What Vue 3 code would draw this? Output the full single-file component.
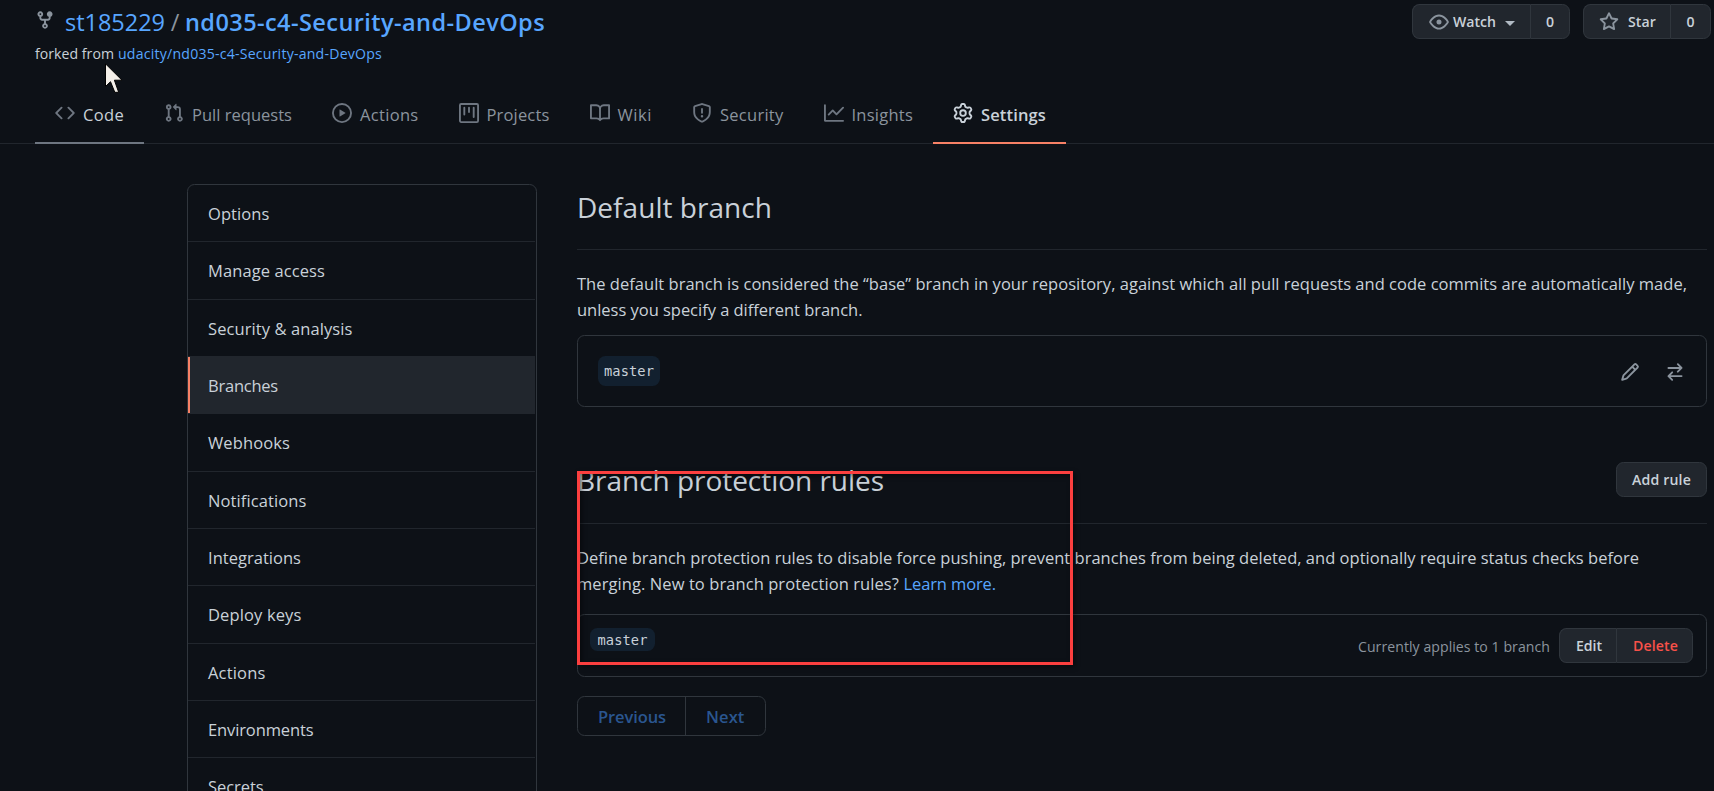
<script setup>
// Tracks a text run so that it fills the given width in pixels.
const vFit = {
  mounted(el, { value }) {
    const natural = el.getBoundingClientRect().width
    const count = el.textContent.length
    el.style.letterSpacing = `${(value - natural) / count}px`
  },
}

const icons = {
  fork: 'M5 3.25a.75.75 0 11-1.5 0 .75.75 0 011.5 0zm0 2.122a2.25 2.25 0 10-1.5 0v.878A2.25 2.25 0 005.75 8.5h1.5v2.128a2.251 2.251 0 101.5 0V8.5h1.5a2.25 2.25 0 002.25-2.25v-.878a2.25 2.25 0 10-1.5 0v.878a.75.75 0 01-.75.75h-4.5A.75.75 0 015 6.25v-.878zm3.75 7.378a.75.75 0 11-1.5 0 .75.75 0 011.5 0zm3-8.75a.75.75 0 100-1.5.75.75 0 000 1.5z',
  code: 'M4.72 3.22a.75.75 0 011.06 1.06L2.06 8l3.72 3.72a.75.75 0 11-1.06 1.06L.47 8.53a.75.75 0 010-1.06l4.25-4.25zm6.56 0a.75.75 0 10-1.06 1.06L13.94 8l-3.72 3.72a.75.75 0 101.06 1.06l4.25-4.25a.75.75 0 000-1.06l-4.25-4.25z',
  pull: 'M7.177 3.073L9.573.677A.25.25 0 0110 .854v4.792a.25.25 0 01-.427.177L7.177 3.427a.25.25 0 010-.354zM3.75 2.5a.75.75 0 100 1.5.75.75 0 000-1.5zm-2.25.75a2.25 2.25 0 113 2.122v5.256a2.251 2.251 0 11-1.5 0V5.372A2.25 2.25 0 011.5 3.25zM11 2.5h-1V4h1a1 1 0 011 1v5.628a2.251 2.251 0 101.5 0V5A2.5 2.5 0 0011 2.5zm1 10.25a.75.75 0 111.5 0 .75.75 0 01-1.5 0zM3.75 12a.75.75 0 100 1.5.75.75 0 000-1.5z',
  play: 'M1.5 8a6.5 6.5 0 1113 0 6.5 6.5 0 01-13 0zM8 0a8 8 0 100 16A8 8 0 008 0zM6.379 5.227A.25.25 0 006 5.442v5.117a.25.25 0 00.379.214l4.264-2.559a.25.25 0 000-.428L6.379 5.227z',
  project: 'M1.75 0A1.75 1.75 0 000 1.75v12.5C0 15.216.784 16 1.75 16h12.5A1.75 1.75 0 0016 14.25V1.75A1.75 1.75 0 0014.25 0H1.75zM1.5 1.75a.25.25 0 01.25-.25h12.5a.25.25 0 01.25.25v12.5a.25.25 0 01-.25.25H1.75a.25.25 0 01-.25-.25V1.75zM11.75 3a.75.75 0 00-.75.75v7.5a.75.75 0 001.5 0v-7.5a.75.75 0 00-.75-.75zm-8.25.75a.75.75 0 011.5 0v5.5a.75.75 0 01-1.5 0v-5.5zM8 3a.75.75 0 00-.75.75v3.5a.75.75 0 001.5 0v-3.5A.75.75 0 008 3z',
  book: 'M0 1.75A.75.75 0 01.75 1h4.253c1.227 0 2.317.59 3 1.501A3.744 3.744 0 0111.006 1h4.245a.75.75 0 01.75.75v10.5a.75.75 0 01-.75.75h-4.507a2.25 2.25 0 00-1.591.659l-.622.621a.75.75 0 01-1.06 0l-.622-.621A2.25 2.25 0 005.258 13H.75a.75.75 0 01-.75-.75V1.75zm8.755 3a2.25 2.25 0 012.25-2.25H14.5v9h-3.757c-.71 0-1.4.201-1.992.572l.004-7.322zm-1.504 7.324l.004-5.073-.002-2.253A2.25 2.25 0 005.003 2.5H1.5v9h3.757a3.75 3.75 0 011.994.574z',
  shield: 'M7.467.133a1.75 1.75 0 011.066 0l5.25 1.68A1.75 1.75 0 0115 3.48V7c0 1.566-.32 3.182-1.303 4.682-.983 1.498-2.585 2.813-5.032 3.855a1.7 1.7 0 01-1.33 0c-2.447-1.042-4.049-2.357-5.032-3.855C1.32 10.182 1 8.566 1 7V3.48a1.75 1.75 0 011.217-1.667l5.25-1.68zm.61 1.429a.25.25 0 00-.153 0l-5.25 1.68a.25.25 0 00-.174.238V7c0 1.358.275 2.666 1.057 3.86.784 1.194 2.121 2.34 4.366 3.297a.2.2 0 00.154 0c2.245-.956 3.582-2.104 4.366-3.298C13.225 9.666 13.5 8.36 13.5 7V3.48a.25.25 0 00-.174-.237l-5.25-1.68zM9 10.5a1 1 0 11-2 0 1 1 0 012 0zm-.25-5.75a.75.75 0 10-1.5 0v3a.75.75 0 001.5 0v-3z',
  graph: 'M1.5 1.75a.75.75 0 00-1.5 0v12.5c0 .414.336.75.75.75h14.5a.75.75 0 000-1.5H1.5V1.75zm14.28 2.53a.75.75 0 00-1.06-1.06L10 7.94 7.53 5.47a.75.75 0 00-1.06 0L3.22 8.72a.75.75 0 001.06 1.06L7 7.06l2.47 2.47a.75.75 0 001.06 0l5.25-5.25z',
  gear: 'M7.429 1.525a6.593 6.593 0 011.142 0c.036.003.108.036.137.146l.289 1.105c.147.56.55.967.997 1.189.174.086.341.183.501.29.417.278.97.423 1.53.27l1.102-.303c.11-.03.175.016.195.046.219.31.41.641.573.989.014.031.022.11-.059.19l-.815.806c-.411.406-.562.957-.53 1.456a4.588 4.588 0 010 .582c-.032.499.119 1.05.53 1.456l.815.806c.08.08.073.159.059.19a6.494 6.494 0 01-.573.99c-.02.029-.086.074-.195.045l-1.103-.303c-.559-.153-1.112-.008-1.529.27-.16.107-.327.204-.5.29-.449.222-.851.628-.998 1.189l-.289 1.105c-.029.11-.101.143-.137.146a6.613 6.613 0 01-1.142 0c-.036-.003-.108-.037-.137-.146l-.289-1.105c-.147-.56-.55-.967-.997-1.189a4.502 4.502 0 01-.501-.29c-.417-.278-.97-.423-1.53-.27l-1.102.303c-.11.03-.175-.016-.195-.046a6.492 6.492 0 01-.573-.989c-.014-.031-.022-.11.059-.19l.815-.806c.411-.406.562-.957.53-1.456a4.587 4.587 0 010-.582c.032-.499-.119-1.05-.53-1.456l-.815-.806c-.08-.08-.073-.159-.059-.19a6.44 6.44 0 01.573-.99c.02-.029.086-.075.195-.045l1.103.303c.559.153 1.112.008 1.529-.27.16-.107.327-.204.5-.29.449-.222.851-.628.998-1.189l.289-1.105c.029-.11.101-.143.137-.146zM8 0c-.236 0-.47.01-.701.03-.743.065-1.29.615-1.458 1.261l-.29 1.106c-.017.066-.078.158-.211.224a5.994 5.994 0 00-.668.386c-.123.082-.233.09-.3.071L3.27 2.776c-.644-.177-1.392.02-1.82.63a7.977 7.977 0 00-.704 1.217c-.315.675-.111 1.422.363 1.891l.815.806c.05.048.098.147.088.294a6.084 6.084 0 000 .772c.01.147-.038.246-.088.294l-.815.806c-.474.469-.678 1.216-.363 1.891.2.428.436.835.704 1.218.428.609 1.176.806 1.82.63l1.103-.303c.066-.019.176-.011.299.071.213.143.436.272.668.386.133.066.194.158.212.224l.289 1.106c.169.646.715 1.196 1.458 1.26a8.094 8.094 0 001.402 0c.743-.064 1.29-.614 1.458-1.26l.29-1.106c.017-.066.078-.158.211-.224a5.98 5.98 0 00.668-.386c.123-.082.233-.09.3-.071l1.102.302c.644.177 1.392-.02 1.82-.63.268-.382.505-.789.704-1.217.315-.675.111-1.422-.364-1.891l-.814-.806c-.05-.048-.098-.147-.088-.294a6.1 6.1 0 000-.772c-.01-.147.039-.246.088-.294l.814-.806c.475-.469.679-1.216.364-1.891a7.992 7.992 0 00-.704-1.218c-.428-.609-1.176-.806-1.82-.63l-1.103.303c-.066.019-.176.011-.299-.071a5.991 5.991 0 00-.668-.386c-.133-.066-.194-.158-.212-.224L10.16 1.29C9.99.645 9.444.095 8.701.031A8.094 8.094 0 008 0zm1.5 8a1.5 1.5 0 11-3 0 1.5 1.5 0 013 0zM11 8a3 3 0 11-6 0 3 3 0 016 0z',
  eye: 'M1.679 7.932c.412-.621 1.242-1.75 2.366-2.717C5.175 4.242 6.527 3.5 8 3.5c1.473 0 2.824.742 3.955 1.715 1.124.967 1.954 2.096 2.366 2.717a.119.119 0 010 .136c-.412.621-1.242 1.75-2.366 2.717C10.825 11.758 9.473 12.5 8 12.5c-1.473 0-2.824-.742-3.955-1.715C2.92 9.818 2.09 8.69 1.679 8.068a.119.119 0 010-.136zM8 2c-1.981 0-3.67.992-4.933 2.078C1.797 5.169.88 6.423.43 7.1a1.619 1.619 0 000 1.798c.45.678 1.367 1.932 2.637 3.024C4.329 13.008 6.019 14 8 14c1.981 0 3.67-.992 4.933-2.078 1.27-1.091 2.187-2.345 2.637-3.023a1.619 1.619 0 000-1.798c-.45-.678-1.367-1.932-2.637-3.023C11.671 2.992 9.981 2 8 2zm0 8a2 2 0 100-4 2 2 0 000 4z',
  star: 'M8 .25a.75.75 0 01.673.418l1.882 3.815 4.21.612a.75.75 0 01.416 1.279l-3.046 2.97.719 4.192a.75.75 0 01-1.088.791L8 12.347l-3.766 1.98a.75.75 0 01-1.088-.79l.72-4.194L.818 6.374a.75.75 0 01.416-1.28l4.21-.611L7.327.668A.75.75 0 018 .25zm0 2.445L6.615 5.5a.75.75 0 01-.564.41l-3.097.45 2.24 2.184a.75.75 0 01.216.664l-.528 3.084 2.769-1.456a.75.75 0 01.698 0l2.77 1.456-.53-3.084a.75.75 0 01.216-.664l2.24-2.183-3.096-.45a.75.75 0 01-.564-.41L8 2.694v.001z',
  pencil: 'M11.013 1.427a1.75 1.75 0 012.474 0l1.086 1.086a1.75 1.75 0 010 2.474l-8.61 8.61c-.21.21-.47.364-.756.445l-3.251.93a.75.75 0 01-.927-.928l.929-3.25a1.75 1.75 0 01.445-.758l8.61-8.61zm1.414 1.06a.25.25 0 00-.354 0L10.811 3.75l1.439 1.44 1.263-1.263a.25.25 0 000-.354l-1.086-1.086zM11.189 6.25L9.75 4.81l-6.286 6.287a.25.25 0 00-.064.108l-.558 1.953 1.953-.558a.249.249 0 00.108-.064l6.286-6.286z',
  swap: 'M5.22 14.78a.75.75 0 001.06-1.06L4.56 12h8.69a.75.75 0 000-1.5H4.56l1.72-1.72a.75.75 0 00-1.06-1.06l-3 3a.75.75 0 000 1.06l3 3zm5.56-6.5a.75.75 0 11-1.06-1.06l1.72-1.72H2.75a.75.75 0 010-1.5h8.69L9.72 2.28a.75.75 0 011.06-1.06l3 3a.75.75 0 010 1.06l-3 3z',
}

const tabs = [
  { label: 'Code', icon: 'code', fit: 41, state: 'hovered' },
  { label: 'Pull requests', icon: 'pull', fit: 100 },
  { label: 'Actions', icon: 'play', fit: 58.5 },
  { label: 'Projects', icon: 'project', fit: 63 },
  { label: 'Wiki', icon: 'book', fit: 34.5 },
  { label: 'Security', icon: 'shield', fit: 63.5 },
  { label: 'Insights', icon: 'graph', fit: 61.5 },
  { label: 'Settings', icon: 'gear', fit: 65, state: 'selected' },
]

const menu = [
  { label: 'Options', fit: 61.5 },
  { label: 'Manage access', fit: 117 },
  { label: 'Security & analysis', fit: 144.5 },
  { label: 'Branches', fit: 70 },
  { label: 'Webhooks', fit: 82 },
  { label: 'Notifications', fit: 98.5 },
  { label: 'Integrations', fit: 93 },
  { label: 'Deploy keys', fit: 93.5 },
  { label: 'Actions', fit: 57.5 },
  { label: 'Environments', fit: 105.5 },
  { label: 'Secrets', fit: 55.5 },
]
const current = 'Branches'
</script>

<template>
  <div class="page">
    <header class="head">
      <div class="repo">
        <div class="title">
          <svg class="icon fork" viewBox="0 0 16 16"><path :d="icons.fork" /></svg>
          <a v-fit="100" class="owner">st185229</a>
          <span class="slash">/</span>
          <a v-fit="360" class="name">nd035-c4-Security-and-DevOps</a>
        </div>
        <div class="origin">
          <span v-fit="79">forked from</span>
          <a v-fit="264">udacity/nd035-c4-Security-and-DevOps</a>
        </div>
      </div>
      <div class="actions">
        <div class="group watch">
          <button class="btn">
            <svg class="icon" viewBox="0 0 16 16"><path :d="icons.eye" /></svg>
            <span v-fit="43">Watch</span>
            <i class="caret"></i>
          </button>
          <button class="btn count">0</button>
        </div>
        <div class="group star">
          <button class="btn">
            <svg class="icon" viewBox="0 0 16 16"><path :d="icons.star" /></svg>
            <span v-fit="28">Star</span>
          </button>
          <button class="btn count">0</button>
        </div>
      </div>
    </header>

    <nav class="tabs">
      <a v-for="t in tabs" :key="t.label" class="tab" :class="t.state">
        <svg class="icon" viewBox="0 0 16 16"><path fill-rule="evenodd" :d="icons[t.icon]" /></svg>
        <span v-fit="t.fit">{{ t.label }}</span>
      </a>
    </nav>

    <div class="body">
      <aside class="menu">
        <a v-for="m in menu" :key="m.label" class="entry" :class="{ selected: m.label === current }">
          <span v-fit="m.fit">{{ m.label }}</span>
        </a>
      </aside>

      <main class="main">
        <div class="heading">
          <h2 v-fit="195">Default branch</h2>
        </div>
        <p class="text">
          <span v-fit="1110">The default branch is considered the “base” branch in your repository, against which all pull requests and code commits are automatically made,</span><br />
          <span v-fit="285.5">unless you specify a different branch.</span>
        </p>
        <div class="box default-box">
          <code class="branch tall"><span v-fit="50">master</span></code>
          <div class="tools">
            <svg class="icon" viewBox="0 0 16 16"><path fill-rule="evenodd" :d="icons.pencil" /></svg>
            <svg class="icon" viewBox="0 0 16 16"><path :d="icons.swap" /></svg>
          </div>
        </div>

        <div class="heading rules">
          <h2 v-fit="307">Branch protection rules</h2>
          <button class="btn single"><span v-fit="59">Add rule</span></button>
        </div>
        <p class="text">
          <span v-fit="1062">Define branch protection rules to disable force pushing, prevent branches from being deleted, and optionally require status checks before</span><br />
          <span v-fit="322">merging. New to branch protection rules?</span>
          <a v-fit="92.5" class="more">Learn more.</a>
        </p>
        <div class="box rule-box">
          <code class="branch"><span v-fit="50">master</span></code>
          <div class="rule-side">
            <span v-fit="192" class="applies">Currently applies to 1 branch</span>
            <div class="group edit">
              <button class="btn"><span v-fit="26">Edit</span></button>
              <button class="btn danger"><span v-fit="45">Delete</span></button>
            </div>
          </div>
        </div>
        <div class="pager">
          <span class="page-link prev"><span v-fit="68">Previous</span></span>
          <span class="page-link"><span v-fit="38.5">Next</span></span>
        </div>
      </main>
    </div>

    <div class="marker"></div>
    <svg class="cursor" viewBox="0 0 18 30">
      <path d="M.5 .8v22.7l5-4.8 4.3 10.6h3.9L9.4 17.2h7.6z" fill="#f3efe9" stroke="#000" stroke-width="1" />
    </svg>
  </div>
</template>

<style>
html,
body {
  background: #0d1117;
  overflow: hidden;
}
</style>

<style scoped>
.page {
  position: relative;
  width: 1714px;
  height: 791px;
  overflow: hidden;
  box-sizing: border-box;
  background: #0d1117;
  color: #c9d1d9;
  font: 16.5px/26.25px "Open Sans", "Noto Sans", sans-serif;
}
.page *,
.page *::before {
  box-sizing: border-box;
}
.page span,
.page a,
.page h2 {
  white-space: pre;
}
a {
  color: #58a6ff;
}
.icon {
  width: 20px;
  height: 20px;
  flex: none;
  fill: #8b949e;
}

/* header */
.head {
  display: flex;
  justify-content: space-between;
  height: 86px;
  padding: 3px 3px 0 35px;
}
.title {
  display: flex;
  height: 38px;
  font-size: 23.5px;
  line-height: 38px;
}
.fork {
  margin: 7px 10px 0 0;
}
.slash {
  width: 20px;
  color: #8b949e;
  text-align: center;
}
.name {
  font-weight: 600;
}
.origin {
  display: flex;
  gap: 4px;
  font-size: 14.1px;
  line-height: 25px;
}
.actions {
  display: flex;
  gap: 13px;
  padding-top: 1px;
}
.group {
  display: flex;
  height: 35px;
}
.btn {
  display: flex;
  align-items: center;
  height: 35px;
  margin: 0;
  padding: 0 16px;
  border: 1px solid #30363d;
  border-radius: 7.5px;
  background: #21262d;
  color: #c9d1d9;
  font: 600 14.1px/25px "Open Sans", "Noto Sans", sans-serif;
}
.group .btn:first-child {
  border-right: 0;
  border-radius: 7.5px 0 0 7.5px;
}
.group .btn:last-child {
  border-radius: 0 7.5px 7.5px 0;
}
.watch .btn:first-child {
  width: 118px;
  padding-left: 16px;
}
.watch .icon {
  margin-right: 4px;
}
.watch .count {
  width: 40px;
}
.star .btn:first-child {
  width: 87px;
  padding-left: 15px;
}
.star .icon {
  margin-right: 9px;
}
.star .count {
  width: 41px;
}
.count {
  justify-content: center;
  padding: 0;
}
.caret {
  margin: 4px 0 0 9px;
  border: 5px solid transparent;
  border-top-color: #b1bac4;
  border-bottom: 0;
}

/* tabs */
.tabs {
  display: flex;
  height: 58px;
  padding-left: 35px;
  border-bottom: 1px solid #21262d;
}
.tab {
  display: flex;
  align-items: center;
  height: 58px;
  padding: 2px 20px 0;
  border-bottom: 2px solid transparent;
  color: #8b949e;
}
.tab .icon {
  margin: 0 8px 5px 0;
  fill: #6e7681;
}
.tab.hovered {
  border-color: #6e7681;
  color: #c9d1d9;
}
.tab.selected {
  border-color: #f78166;
  color: #c9d1d9;
  font-weight: 600;
}
.tab.selected .icon {
  fill: #c9d1d9;
}

/* body */
.body {
  display: flex;
  align-items: flex-start;
  gap: 40px;
  padding: 40px 7px 0 187px;
}
.menu {
  width: 350px;
  flex: none;
  padding-right: 1px;
  border: 1px solid #30363d;
  border-radius: 7.5px;
}
.entry {
  position: relative;
  display: flex;
  align-items: center;
  height: 57.33px;
  padding: 2px 0 0 20px;
  border-bottom: 1px solid #21262d;
  color: #c9d1d9;
}
.entry.selected {
  background: #21262d;
}
.entry.selected::before {
  content: "";
  position: absolute;
  top: 0;
  left: 0;
  width: 2px;
  height: 100%;
  background: #f78166;
}
.main {
  flex: 1;
  min-width: 0;
}
.heading {
  display: flex;
  justify-content: space-between;
  align-items: flex-start;
  height: 66px;
  border-bottom: 1px solid #21262d;
}
.heading h2 {
  margin: 0;
  font-size: 28px;
  font-weight: 400;
  line-height: 47px;
}
.heading.rules {
  height: 67px;
  margin-top: 50px;
}
.single {
  width: 91px;
  margin-top: 5px;
  padding: 0 15px;
}
.text {
  margin: 21px 0 0;
  height: 52.5px;
}
.text span,
.text a {
  display: inline-block;
}
.more {
  margin-left: 4.5px;
}
.box {
  display: flex;
  align-items: center;
  justify-content: space-between;
  border: 1px solid #30363d;
  border-radius: 7.5px;
}
.default-box {
  height: 72px;
  margin-top: 11.5px;
  padding: 0 20px;
}
.branch {
  display: flex;
  align-items: center;
  height: 23px;
  padding: 0 7.5px;
  border-radius: 7.5px;
  background: #12202f;
  font: 13.7px/20px "DejaVu Sans Mono", "Liberation Mono", monospace;
}
.branch.tall {
  height: 30px;
  padding: 0 6px;
}
.tools {
  display: flex;
  gap: 25px;
  padding: 2px 1px 0 0;
}
.rule-box {
  height: 63px;
  margin-top: 16.5px;
  padding: 0 13px 0 12px;
}
.rule-box .branch {
  margin-bottom: 12px;
}
.rule-side {
  display: flex;
  align-items: center;
  gap: 9px;
}
.applies {
  padding-top: 3px;
  color: #8b949e;
  font-size: 14.1px;
}
.edit .btn:first-child {
  width: 57px;
}
.edit .btn:last-child {
  width: 77px;
}
.danger {
  color: #f85149;
}
.pager {
  display: flex;
  width: 189px;
  height: 40px;
  margin-top: 19px;
  border: 1px solid #30363d;
  border-radius: 7.5px;
  color: #2a5690;
  font-weight: 600;
}
.page-link {
  display: flex;
  align-items: center;
  padding: 2px 0 0 20px;
}
.prev {
  width: 108px;
  border-right: 1px solid #30363d;
}

/* overlays */
.marker {
  position: absolute;
  left: 577px;
  top: 471px;
  width: 496px;
  height: 194px;
  border: 3px solid #fb3f3f;
  box-shadow: 2px 2px 5px rgba(0, 0, 0, 0.45), inset 2px 2px 5px rgba(0, 0, 0, 0.45);
}
.cursor {
  position: absolute;
  left: 105px;
  top: 63px;
  width: 18px;
  height: 30px;
}
</style>
